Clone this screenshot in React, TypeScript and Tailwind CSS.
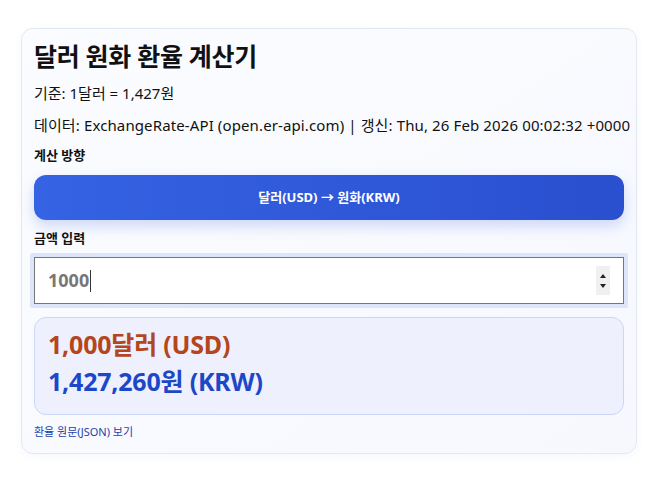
import React from 'react';

const font = { fontFamily: '"Noto Sans", "Noto Sans CJK KR", sans-serif' };

export default function App() {
  return (
    <div className="min-h-screen bg-white px-[21px] pt-[28px] text-[#111]" style={font}>
      <div className="rounded-[12px] border border-[#e3e7f1] bg-gradient-to-br from-[#fbfcff] to-[#f6f8fe] px-[12px] pt-[10px] pb-[13px] shadow-[0_2px_10px_rgba(60,80,160,0.04)]">
        <h1 className="text-[25px] font-bold leading-[34px] tracking-[-0.3px] text-[#111]">달러 원화 환율 계산기</h1>
        <p className="mt-[10px] text-[15px] leading-[20px]">기준: 1달러 = 1,427원</p>
        <p className="mt-[12px] whitespace-nowrap text-[15px] leading-[20px] tracking-[0.12px]">
          데이터: ExchangeRate-API (open.er-api.com) | 갱신: Thu, 26 Feb 2026 00:02:32 +0000
        </p>
        <div className="mt-[11px] text-[13px] font-bold leading-[18px]">계산 방향</div>
        <button className="mt-[11px] flex h-[45px] w-full items-center justify-center rounded-[12px] bg-gradient-to-r from-[#3563e3] to-[#2a4fcf] text-[13px] font-bold text-white shadow-[0_6px_14px_rgba(50,90,220,0.22)]">
          달러(USD) → 원화(KRW)
        </button>
        <div className="mt-[9px] text-[13px] font-bold leading-[18px]">금액 입력</div>
        <div className="mt-[6px] rounded-[2px] bg-[#dde5fb] p-[4px] -mx-[4px]">
          <div className="flex h-[47px] items-center border border-[#767676] bg-white pl-[13px] pr-[13px]">
            <span className="text-[18px] font-bold text-[#777]">1000</span>
            <span className="ml-[1px] h-[22px] w-[1px] bg-[#333]" />
            <div className="ml-auto flex h-[29px] w-[14px] flex-col items-center justify-center gap-[6px] bg-[#f0f0f0]">
              <span className="h-0 w-0 border-x-[3.5px] border-b-[4px] border-x-transparent border-b-[#222]" />
              <span className="h-0 w-0 border-x-[3.5px] border-t-[4px] border-x-transparent border-t-[#222]" />
            </div>
          </div>
        </div>
        <div className="mt-[9px] rounded-[12px] border border-[#cdd6f6] bg-[#eef0fd] px-[13px] pt-[8px] pb-[14px]">
          <div className="text-[25px] font-bold leading-[37px] tracking-[-0.2px] text-[#b4451c]">1,000달러 (USD)</div>
          <div className="text-[25px] font-bold leading-[37px] tracking-[-0.2px] text-[#1d47c9]">1,427,260원 (KRW)</div>
        </div>
        <a className="mt-[9px] block text-[11px] leading-[16px] text-[#1f3fa8]">환율 원문(JSON) 보기</a>
      </div>
    </div>
  );
}
